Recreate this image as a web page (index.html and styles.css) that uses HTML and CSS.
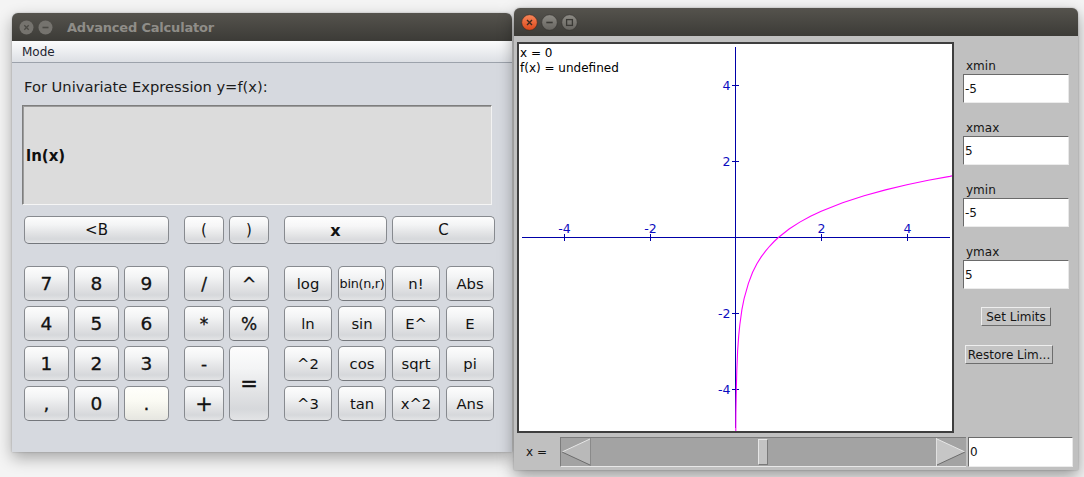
FILE: index.html
```html
<!DOCTYPE html>
<html>
<head>
<meta charset="utf-8">
<title>Advanced Calculator</title>
<link rel="stylesheet" href="styles.css">
</head>
<body>
<div class="win calc">
  <div class="titlebar">
    <svg class="tb-btn dim" viewBox="0 0 15 15"><circle cx="7.5" cy="7.5" r="7" fill="#75736e"/><path d="M5.3 5.3l4.4 4.4M9.7 5.3l-4.4 4.4" stroke="#4b4a45" stroke-width="1.3"/></svg>
    <svg class="tb-btn dim" viewBox="0 0 15 15"><circle cx="7.5" cy="7.5" r="7" fill="#75736e"/><path d="M4.5 7.5h6" stroke="#4b4a45" stroke-width="1.6"/></svg>
    <span class="title">Advanced Calculator</span>
  </div>
  <div class="menubar"><span class="menu">Mode</span></div>
  <div class="calc-body">
    <div class="prompt">For Univariate Expression y=f(x):</div>
    <div class="display"><span class="expr">ln(x)</span></div>
    <div class="toprow">
      <div class="btn w145">&lt;B</div>
      <div class="btn w40 lpar gl">(</div>
      <div class="btn w40 rpar">)</div>
      <div class="btn w103 var gl bold">x</div>
      <div class="btn w103 clr">C</div>
    </div>
    <div class="keypad">
      <div class="nums">
        <div class="btn num">7</div><div class="btn num">8</div><div class="btn num">9</div>
        <div class="btn num">4</div><div class="btn num">5</div><div class="btn num">6</div>
        <div class="btn num">1</div><div class="btn num">2</div><div class="btn num">3</div>
        <div class="btn num">,</div><div class="btn num">0</div><div class="btn num hot">.</div>
      </div>
      <div class="ops">
        <div class="btn op">/</div><div class="btn op">^</div>
        <div class="btn op">*</div><div class="btn op">%</div>
        <div class="btn op">-</div><div class="btn op eq">=</div>
        <div class="btn op plus">+</div>
      </div>
      <div class="funcs">
        <div class="btn fn">log</div><div class="btn fn narrow">bin(n,r)</div><div class="btn fn">n!</div><div class="btn fn">Abs</div>
        <div class="btn fn">ln</div><div class="btn fn">sin</div><div class="btn fn">E^</div><div class="btn fn">E</div>
        <div class="btn fn">^2</div><div class="btn fn">cos</div><div class="btn fn">sqrt</div><div class="btn fn">pi</div>
        <div class="btn fn">^3</div><div class="btn fn">tan</div><div class="btn fn">x^2</div><div class="btn fn">Ans</div>
      </div>
    </div>
  </div>
</div>

<div class="win plot">
  <div class="titlebar focus">
    <svg class="tb-btn big" viewBox="0 0 17 17"><defs><linearGradient id="cg" x1="0" y1="0" x2="0" y2="1"><stop offset="0" stop-color="#f9875a"/><stop offset="1" stop-color="#d9471b"/></linearGradient></defs><circle cx="8.5" cy="8.5" r="7.8" fill="url(#cg)" stroke="#3a2a22" stroke-width=".6"/><path d="M6 6l5 5M11 6l-5 5" stroke="#3c2a20" stroke-width="1.4"/></svg>
    <svg class="tb-btn big" viewBox="0 0 17 17"><defs><linearGradient id="gg" x1="0" y1="0" x2="0" y2="1"><stop offset="0" stop-color="#8d8b85"/><stop offset="1" stop-color="#66645f"/></linearGradient></defs><circle cx="8.5" cy="8.5" r="7.8" fill="url(#gg)" stroke="#34332f" stroke-width=".6"/><path d="M5.3 8.5h6.4" stroke="#3a3935" stroke-width="1.6"/></svg>
    <svg class="tb-btn big" viewBox="0 0 17 17"><circle cx="8.5" cy="8.5" r="7.8" fill="url(#gg)" stroke="#34332f" stroke-width=".6"/><rect x="5.6" y="5.6" width="5.8" height="5.8" fill="none" stroke="#3a3935" stroke-width="1.3"/></svg>
  </div>
  <div class="plot-body">
    <div class="plot-top">
      <div class="canvas">
        <svg class="graph" width="433" height="387" viewBox="0 0 433 387">
          <text class="info" x="1" y="13">x = 0</text>
          <text class="info" x="1" y="27.5">f(x) = undefined</text>
          <g class="axis">
            <line x1="3" y1="193.5" x2="431" y2="193.5"/>
            <line x1="216.5" y1="3" x2="216.5" y2="384"/>
            <line x1="45.5" y1="190" x2="45.5" y2="197"/>
            <line x1="131.5" y1="190" x2="131.5" y2="197"/>
            <line x1="302.5" y1="190" x2="302.5" y2="197"/>
            <line x1="388.5" y1="190" x2="388.5" y2="197"/>
            <line x1="213" y1="41.5" x2="220" y2="41.5"/>
            <line x1="213" y1="117.5" x2="220" y2="117.5"/>
            <line x1="213" y1="269.5" x2="220" y2="269.5"/>
            <line x1="213" y1="345.5" x2="220" y2="345.5"/>
          </g>
          <g class="ticks">
            <text x="45.5" y="188.5" text-anchor="middle">-4</text>
            <text x="131.5" y="188.5" text-anchor="middle">-2</text>
            <text x="302.5" y="188.5" text-anchor="middle">2</text>
            <text x="388.5" y="188.5" text-anchor="middle">4</text>
            <text x="211.5" y="46" text-anchor="end">4</text>
            <text x="211.5" y="122" text-anchor="end">2</text>
            <text x="211.5" y="274" text-anchor="end">-2</text>
            <text x="211.5" y="350" text-anchor="end">-4</text>
          </g>
          <polyline class="curve" points="216.8,388 216.8,383.7 216.9,368.5 217.4,342.2 217.8,326.8 218.6,307.3 219.7,291.9 220.8,281 222.9,265.6 225.1,254.7 229.4,239.3 233.6,228.3 237.9,219.8 242.2,212.9 246.5,207.1 250.8,202 255.1,197.5 259.4,193.5 270.1,185 280.8,178.1 291.5,172.2 302.2,167.2 323.6,158.7 345.1,151.7 366.5,145.9 387.9,140.8 409.3,136.3 430.8,132.4 434,131.7"/>
        </svg>
      </div>
      <div class="side">
        <div class="lbl">xmin</div><div class="field">-5</div>
        <div class="lbl">xmax</div><div class="field">5</div>
        <div class="lbl">ymin</div><div class="field">-5</div>
        <div class="lbl">ymax</div><div class="field">5</div>
        <div class="mbtn set">Set Limits</div>
        <div class="mbtn restore">Restore Lim...</div>
      </div>
    </div>
    <div class="plot-bottom">
      <span class="xlbl">x =</span>
      <div class="slider">
        <svg class="arrow" width="30" height="28" viewBox="0 0 30 28"><polygon points="29,1 29,27 1,14" fill="#b9b9b9"/><path d="M1 14L29 1" stroke="#e6e6e6" stroke-width="1"/><path d="M1 14L29 27" stroke="#6c6c6c" stroke-width="1"/><path d="M29.5 0v28" stroke="#8a8a8a"/></svg>
        <div class="track"><div class="thumb"></div></div>
        <svg class="arrow" width="30" height="28" viewBox="0 0 30 28"><polygon points="1,1 1,27 29,14" fill="#c6c6c6"/><path d="M1 1L29 14" stroke="#e6e6e6" stroke-width="1"/><path d="M29 14L1 27" stroke="#6c6c6c" stroke-width="1"/><path d="M.5 0v28" stroke="#e0e0e0"/></svg>
      </div>
      <div class="field xfield">0</div>
    </div>
  </div>
</div>
</body>
</html>
```

FILE: styles.css
```css
* { box-sizing: border-box; }
html, body { margin: 0; padding: 0; }
body {
  width: 1084px;
  height: 477px;
  position: relative;
  overflow: hidden;
  background: #f4f4f4;
  font-family: "DejaVu Sans", sans-serif;
  color: #111;
}

.win {
  position: absolute;
  display: flex;
  flex-direction: column;
  border-radius: 6px 6px 0 0;
}
.calc {
  left: 12px;
  top: 13px;
  width: 500px;
  height: 439px;
  background: #d6d9df;
  box-shadow: 0 6px 16px rgba(0,0,0,0.32), 0 0 2px rgba(0,0,0,0.25);
}
.plot {
  left: 514px;
  top: 8px;
  width: 564px;
  height: 462px;
  background: #c0c0c0;
  box-shadow: 0 6px 16px rgba(0,0,0,0.38), 0 0 2px rgba(0,0,0,0.3);
}

.titlebar {
  height: 28px;
  flex: none;
  display: flex;
  align-items: center;
  padding-left: 7px;
  gap: 4px;
  border-radius: 6px 6px 0 0;
  background: linear-gradient(#55534d, #3c3b37);
}
.titlebar.focus { gap: 3px; padding-left: 7px; }
.tb-btn { width: 15px; height: 15px; flex: none; }
.tb-btn.big { width: 17px; height: 17px; }
.title {
  margin-left: 10px;
  font-weight: bold;
  font-size: 13px;
  letter-spacing: -0.2px;
  color: #8f8d88;
}

.menubar {
  height: 22px;
  flex: none;
  display: flex;
  align-items: center;
  padding-left: 10px;
  background: linear-gradient(#fbfbfc, #e9ebee 60%, #dcdfe4);
  border-bottom: 1px solid #9ca2ab;
}
.menu { font-size: 12px; color: #1e2430; }

.calc-body {
  display: flex;
  flex-direction: column;
  padding: 15px 0 0 12px;
}
.prompt {
  font-size: 14.7px;
  line-height: 18px;
  color: #1b1b1b;
}
.display {
  margin: 9px 0 0 -2px;
  width: 470px;
  height: 100px;
  background: #dcdcdc;
  border: 1px solid #7e7e7e;
  border-right-color: #f2f2f2;
  border-bottom-color: #f5f5f5;
  box-shadow: inset 1px 1px 0 #9c9c9c;
  display: flex;
  align-items: center;
  padding-left: 3px;
  padding-top: 1px;
}
.expr { font-weight: bold; font-size: 15px; color: #0f0f0f; }

.btn {
  display: flex;
  align-items: center;
  justify-content: center;
  border: 1px solid #878a8f;
  border-bottom-color: #74777c;
  border-radius: 5px;
  background: linear-gradient(#fdfdfd 0%, #f3f4f5 30%, #e2e3e5 62%, #d6d8db 85%, #e3e4e6 100%);
  color: #121212;
  font-size: 15px;
}
.btn.gl { background: linear-gradient(#fefefe 0%, #f6f6f7 35%, #e6e7e8 65%, #d9dadd 88%, #e6e6e8 100%); }
.btn.hot { background: linear-gradient(#fffffb 0%, #fbfbf4 40%, #efefe8 75%, #e6e6e1 100%); }

.toprow {
  margin-top: 11px;
  height: 28px;
  display: flex;
}
.w145 { width: 145px; }
.w40 { width: 40px; }
.w103 { width: 103px; }
.lpar { margin-left: 15px; }
.rpar { margin-left: 5px; }
.var { margin-left: 15px; }
.clr { margin-left: 5px; }
.bold { font-weight: bold; font-size: 16px; }

.keypad {
  margin-top: 22px;
  display: flex;
  gap: 15px;
}
.nums {
  display: grid;
  grid-template-columns: repeat(3, 45px);
  grid-template-rows: repeat(4, 35px);
  gap: 5px;
}
.ops {
  display: grid;
  grid-template-columns: repeat(2, 40px);
  grid-template-rows: repeat(4, 35px);
  gap: 5px;
}
.ops .eq { grid-column: 2; grid-row: 3 / span 2; }
.ops .plus { grid-column: 1; grid-row: 4; }
.funcs {
  display: grid;
  grid-template-columns: repeat(4, 48px);
  grid-template-rows: repeat(4, 35px);
  column-gap: 6px;
  row-gap: 5px;
}
.num { font-size: 18.5px; -webkit-text-stroke: 0.3px #121212; }
.op { font-size: 17px; -webkit-text-stroke: 0.3px #121212; }
.op.plus, .op.eq { font-size: 21px; }
.fn { font-size: 14.8px; }
.fn.narrow { font-size: 12.8px; letter-spacing: -0.3px; }

/* plot window */
.plot-body {
  flex: 1;
  display: flex;
  flex-direction: column;
  padding: 6px 0 0 3px;
}
.plot-top { display: flex; }
.canvas {
  width: 437px;
  height: 391px;
  background: #fff;
  border: 2px solid #3e3e3e;
}
.graph { display: block; }
.info { font-family: "DejaVu Sans", sans-serif; font-size: 12px; fill: #000; }
.axis line { stroke: #0000a8; stroke-width: 1; shape-rendering: crispEdges; }
.ticks text { font-family: "DejaVu Sans", sans-serif; font-size: 12.5px; fill: #0c0cc0; }
.curve { fill: none; stroke: #ff00ff; stroke-width: 1.1; }

.side {
  margin-left: 9px;
  width: 106px;
  padding-top: 17px;
  display: flex;
  flex-direction: column;
  align-items: flex-start;
}
.lbl {
  font-size: 12px;
  line-height: 15px;
  height: 15px;
  padding-left: 3px;
  color: #151515;
}
.field {
  width: 106px;
  height: 29px;
  margin-bottom: 18px;
  background: #fff;
  border: 1px solid #6a6a6a;
  border-right-color: #e8e8e8;
  border-bottom-color: #ececec;
  font-size: 12px;
  display: flex;
  align-items: center;
  padding-left: 1px;
  color: #111;
}
.mbtn {
  height: 19px;
  font-size: 12px;
  display: flex;
  align-items: center;
  justify-content: center;
  background: #c4c4c4;
  border: 1px solid #eeeeee;
  border-right-color: #6d6d6d;
  border-bottom-color: #6d6d6d;
  color: #141414;
}
.set { width: 70px; margin-left: 18px; }
.restore { width: 88px; margin-left: 2px; margin-top: 19px; }

.plot-bottom {
  margin-top: 4px;
  height: 30px;
  display: flex;
  align-items: center;
}
.xlbl {
  width: 43px;
  padding-left: 9px;
  font-size: 12px;
  color: #151515;
}
.slider {
  width: 406px;
  height: 30px;
  display: flex;
  border-top: 1px solid #7c7c7c;
  border-left: 1px solid #7c7c7c;
  border-bottom: 1px solid #e8e8e8;
  background: #a3a3a3;
}
.arrow { display: block; flex: none; width: 30px; height: 28px; }
.track { flex: 1; position: relative; }
.thumb {
  position: absolute;
  left: 167px;
  top: 1px;
  width: 10px;
  height: 26px;
  background: #c3c3c3;
  border: 1px solid #e6e6e6;
  border-right-color: #7a7a7a;
  border-bottom-color: #7a7a7a;
}
.xfield {
  margin: 0 0 0 2px;
  width: 105px;
  height: 30px;
}
```
